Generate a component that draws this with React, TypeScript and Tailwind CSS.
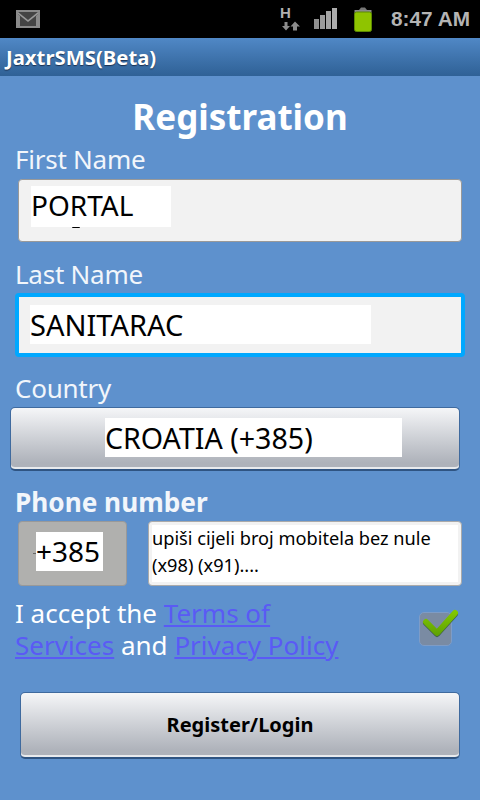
/**
 * Registration screen (Android style)
 */
import React from 'react';

const FONT = "font-['Noto_Sans','Open_Sans',sans-serif]";
const LINK = 'inline-block leading-[32px] text-[#5a5af5] underline';

function MailIcon() {
  return (
    <svg width="24" height="18" viewBox="0 0 24 18">
      <rect x="0" y="0" width="24" height="18" fill="#8a8a8a" />
      <rect x="2" y="2" width="20" height="14" fill="#444" />
      <path d="M2 2 L12 10 L22 2 L22 4 L12 12 L2 4 Z" fill="#9a9a9a" />
      <path d="M2 4 L4 6 L4 16 L2 16 Z M22 4 L20 6 L20 16 L22 16 Z" fill="#8a8a8a" />
    </svg>
  );
}

function DataIcon() {
  return (
    <div className="flex flex-col items-start w-[20px] -mt-[2px]">
      <span className="text-[15px] leading-[15px] font-bold text-[#b0b0b0] font-['Liberation_Sans',sans-serif]">H</span>
      <svg className="mt-[1px] ml-[1px]" width="20" height="10" viewBox="0 0 20 10">
        <path d="M5 9.5 L1 5 H3.5 V1 H6.5 V5 H9 Z" fill="#8c8c8c" />
        <path d="M14 0.5 L19 5.5 H16 V9.5 H12 V5.5 H9.5 Z" fill="#8c8c8c" />
      </svg>
    </div>
  );
}

function SignalIcon() {
  return (
    <svg width="24" height="21" viewBox="0 0 24 21">
      <rect x="0" y="11" width="5" height="10" fill="#8f8f8f" />
      <rect x="6" y="7" width="5" height="14" fill="#9a9a9a" />
      <rect x="12" y="3" width="5" height="18" fill="#a3a3a3" />
      <rect x="18" y="0" width="5" height="21" fill="#adadad" />
    </svg>
  );
}

function BatteryIcon() {
  return (
    <svg width="18" height="25" viewBox="0 0 18 25">
      <path d="M5 3 L7 0.5 H11 L13 3 Z" fill="#777" />
      <rect x="0.5" y="3" width="17" height="3" fill="#8a8a8a" />
      <rect x="0.5" y="5" width="17" height="19.5" rx="2" fill="#8fc400" stroke="#5d8a00" strokeWidth="1" />
    </svg>
  );
}

function CheckBox() {
  return (
    <div className="relative w-[33px] h-[34px] rounded-[5px] bg-[#7a8ba3] border border-[#7e9cc6]">
      <svg className="absolute -top-[4px] -left-[1px]" width="40" height="32" viewBox="0 0 40 32">
        <defs>
          <linearGradient id="checkFill" gradientUnits="userSpaceOnUse" x1="0" y1="0" x2="0" y2="28">
            <stop offset="0" stopColor="#86cc00" />
            <stop offset="1" stopColor="#5c9f04" />
          </linearGradient>
        </defs>
        <path d="M7 13 L18 24 L36 4" fill="none" stroke="#3f5f4a" strokeWidth="6" strokeLinecap="round" strokeLinejoin="round" transform="translate(0 1)" />
        <path d="M7 13 L18 24 L36 4" fill="none" stroke="url(#checkFill)" strokeWidth="6" strokeLinecap="round" strokeLinejoin="round" />
      </svg>
    </div>
  );
}

function GrayButton({ className, children }: { className: string; children: React.ReactNode }) {
  return (
    <div className={`flex items-center justify-center rounded-[5px] border border-[#3f6a9e] border-b-[2px] border-b-[#2f5482] bg-gradient-to-b from-[#f5f6f8] to-[#aeb2ba] to-[90%] shadow-[inset_0_-2px_0_#e8eaed] ${className}`}>
      {children}
    </div>
  );
}

const LABEL = 'pl-[15px] h-[30px] leading-[30px] text-[26px] tracking-[-0.25px] text-[#f2f6fb]';

export default function App() {
  return (
    <div className={`w-[480px] h-[800px] flex flex-col overflow-hidden bg-[#5e91cd] ${FONT}`}>
      {/* 상태바 */}
      <div className="h-[38px] bg-black flex items-center justify-between pl-[16px] pr-[10px]">
        <div className="-mt-[1px]"><MailIcon /></div>
        <div className="flex items-center">
          <DataIcon />
          <div className="ml-[14px] -mt-[1px]"><SignalIcon /></div>
          <div className="ml-[16px] mt-[1px]"><BatteryIcon /></div>
          <span className="ml-[19px] text-[20.8px] font-bold text-[#b4b4b4] font-['Liberation_Sans',sans-serif]">8:47 AM</span>
        </div>
      </div>

      {/* 타이틀바 */}
      <div className="h-[38px] flex items-center pl-[6px] bg-gradient-to-b from-[#5088c6] to-[#2f6196]">
        <span className="text-[20.3px] font-bold text-white [text-shadow:0_1px_1px_#1b3050]">JaxtrSMS(Beta)</span>
      </div>

      {/* 폼 */}
      <div className="flex-1 flex flex-col">
        <h1 className="mt-[18px] h-[46px] leading-[46px] text-center text-[35px] font-bold text-white">Registration</h1>

        <label className={`${LABEL} mt-[4px]`}>First Name</label>
        <div className="relative ml-[18px] mt-[5px] w-[444px] h-[63px] rounded-[4px] border border-[#999] bg-[#f2f2f2] pl-[12px] pt-[6px]">
          <div className="w-[140px] h-[41px] bg-white text-[28px] leading-[39px] text-black">PORTAL</div>
          <div className="absolute left-[53px] top-[47px] w-[8px] h-[1px] rounded-t-full bg-black" />
        </div>

        <label className={`${LABEL} mt-[17px]`}>Last Name</label>
        <div className="ml-[15px] mt-[4px] w-[450px] h-[64px] rounded-[4px] border-[4px] border-[#00a8ff] bg-[#f2f2f2] pl-[11px] pt-[8px]">
          <div className="w-[341px] h-[39px] bg-white text-[29px] leading-[39px] text-black">SANITARAC</div>
        </div>

        <label className={`${LABEL} mt-[16px]`}>Country</label>
        <GrayButton className="ml-[10px] mt-[4px] w-[450px] h-[64px]">
          <div className="w-[297px] h-[39px] bg-white text-[28.6px] leading-[39px] text-black ml-[37px] -mt-[2px]">CROATIA (+385)</div>
        </GrayButton>

        <label className="pl-[15px] mt-[16px] h-[30px] leading-[30px] text-[26.2px] font-bold text-[#f2f6fb]">Phone number</label>
        <div className="ml-[18px] mt-[4px] flex gap-[21px]">
          <div className="relative w-[109px] h-[65px] rounded-[4px] border border-[#999] bg-[#b0b0ae] pl-[17px] pt-[10px]">
            <div className="absolute left-[14px] top-[31px] w-[3px] h-[1px] bg-[#666]" />
            <div className="w-[67px] h-[39px] bg-white text-[28px] leading-[39px] text-black">+385</div>
          </div>
          <div className="w-[314px] h-[65px] rounded-[4px] border border-[#aaa] bg-[#f2f2f2] p-[3px]">
            <div className="h-full bg-white text-[18.2px] leading-[27px] text-black">
              upiši cijeli broj mobitela bez nule
              <br />
              (x98) (x91)....
            </div>
          </div>
        </div>

        <div className="mt-[11px] pl-[15px] pr-[28px] flex items-start justify-between">
          <div className="w-[350px] text-[26px] leading-[32px] text-white">
            <div>I accept the <span className={LINK}>Terms of</span></div>
            <div><span className={LINK}>Services</span> and <span className={LINK}>Privacy Policy</span></div>
          </div>
          <div className="mt-[15px]"><CheckBox /></div>
        </div>

        <GrayButton className="ml-[20px] mt-[31px] w-[440px] h-[67px]">
          <span className="text-[20px] font-bold text-black">Register/Login</span>
        </GrayButton>
      </div>
    </div>
  );
}
